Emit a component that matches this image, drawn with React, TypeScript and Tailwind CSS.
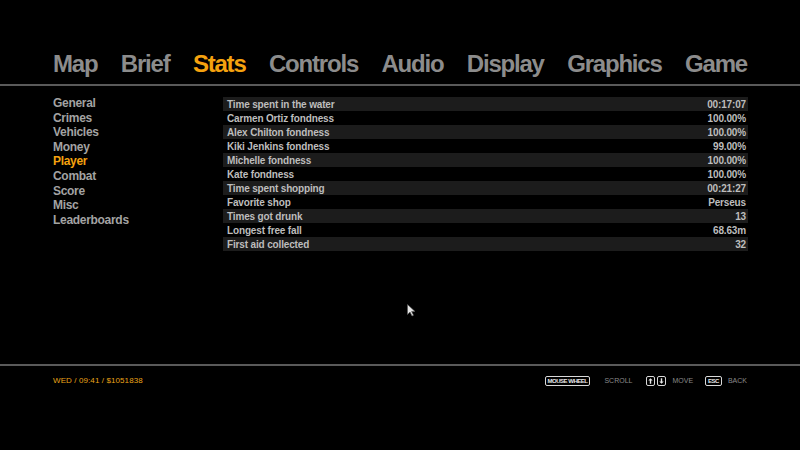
import React from "react";

const tabs = ["Map", "Brief", "Stats", "Controls", "Audio", "Display", "Graphics", "Game"];
const menu = ["General", "Crimes", "Vehicles", "Money", "Player", "Combat", "Score", "Misc", "Leaderboards"];
const rows: [string, string][] = [
  ["Time spent in the water", "00:17:07"],
  ["Carmen Ortiz fondness", "100.00%"],
  ["Alex Chilton fondness", "100.00%"],
  ["Kiki Jenkins fondness", "99.00%"],
  ["Michelle fondness", "100.00%"],
  ["Kate fondness", "100.00%"],
  ["Time spent shopping", "00:21:27"],
  ["Favorite shop", "Perseus"],
  ["Times got drunk", "13"],
  ["Longest free fall", "68.63m"],
  ["First aid collected", "32"],
];

function Key({ children }: { children: React.ReactNode }) {
  return (
    <span className="inline-flex items-center justify-center h-[10px] px-[2px] border border-[#d8d8d8] rounded-[2px] text-[6px] leading-none font-bold text-[#e8e8e8] tracking-[-0.5px]">
      {children}
    </span>
  );
}

function Arrow({ down }: { down?: boolean }) {
  return (
    <span className="inline-flex items-center justify-center w-[9px] h-[10px] border border-[#d8d8d8] rounded-[2px]">
      <svg width="5" height="6" viewBox="0 0 5 6" className={down ? "rotate-180" : ""}>
        <path d="M2.5 0.3 L4.7 2.6 L3.2 2.6 L3.2 5.8 L1.8 5.8 L1.8 2.6 L0.3 2.6 Z" fill="#e8e8e8" />
      </svg>
    </span>
  );
}

export default function App() {
  return (
    <div
      className="relative w-[800px] h-[450px] bg-black flex flex-col overflow-hidden"
      style={{ fontFamily: '"Liberation Sans", Arial, sans-serif' }}
    >
      <div className="h-[84px] pt-[50px] px-[53px] flex justify-between">
        {tabs.map((t) => (
          <span
            key={t}
            className={`text-[24px] leading-[28px] font-bold tracking-[-1.2px] ${
              t === "Stats" ? "text-[#f5a20f]" : "text-[#8c8c8c]"
            }`}
          >
            {t}
          </span>
        ))}
      </div>
      <div className="h-[2px] bg-[#5a5a5a]" />
      <div className="h-[278px] flex pl-[53px] pr-[52px] pt-[11px]">
        <div className="w-[170px] flex flex-col -mt-[1px]">
          {menu.map((m) => (
            <span
              key={m}
              className={`text-[12px] leading-[14.6px] font-bold tracking-[-0.3px] ${
                m === "Player" ? "text-[#f5a20f]" : "text-[#a3a3a3]"
              }`}
            >
              {m}
            </span>
          ))}
        </div>
        <div className="flex-1 flex flex-col">
          {rows.map(([k, v], i) => (
            <div
              key={k}
              className={`h-[14px] flex items-center justify-between pl-[4px] pr-[2px] text-[10px] font-bold tracking-[-0.15px] text-[#bdbdbd] ${
                i % 2 === 0 ? "bg-[#1c1c1c]" : "bg-black"
              }`}
            >
              <span>{k}</span>
              <span>{v}</span>
            </div>
          ))}
        </div>
      </div>
      <div className="h-[2px] bg-[#5a5a5a]" />
      <div className="flex-1 flex items-start justify-between pl-[53px] pr-[53px] pt-[10px]">
        <span className="text-[8px] leading-[10px] text-[#e9a318] tracking-[0.1px]">WED / 09:41 / $1051838</span>
        <div className="flex items-center text-[7px] leading-[10px] text-[#8a8a8a]">
          <Key>MOUSE WHEEL</Key>
          <span className="ml-[14px]">SCROLL</span>
          <span className="ml-[14px] flex gap-[2px]">
            <Arrow />
            <Arrow down />
          </span>
          <span className="ml-[6px]">MOVE</span>
          <span className="ml-[12px]">
            <Key>ESC</Key>
          </span>
          <span className="ml-[6px]">BACK</span>
        </div>
      </div>
      <svg
        className="absolute left-[407px] top-[304px]"
        width="9"
        height="13"
        viewBox="0 0 9 13"
      >
        <path d="M0.5 0.5 L0.5 10.5 L3 8 L5 12 L6.5 11.3 L4.6 7.4 L8 7.4 Z" fill="#e6e6e6" stroke="#555" strokeWidth="0.6" />
      </svg>
    </div>
  );
}
